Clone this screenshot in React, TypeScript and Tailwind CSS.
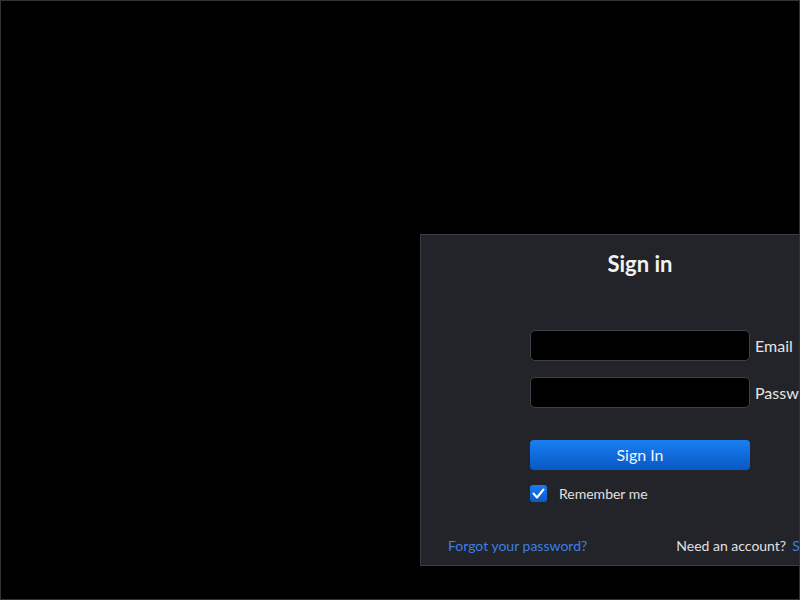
import React, { useState } from "react";

export default function App() {
  const [remember, setRemember] = useState(true);

  return (
    <div
      className="w-[800px] h-[600px] bg-black border border-[#2f3237] overflow-hidden relative"
      style={{ fontFamily: 'Lato, "Noto Sans", sans-serif' }}
    >
      {/* Sign in panel */}
      <div className="absolute left-[419px] top-[233px] w-[440px] h-[332px] bg-[#222429] border border-[#3b3d42] flex flex-col">
        <h2 className="text-[22px] font-bold text-[#f2f2f2] text-center mt-[14px] leading-[30px]">Sign in</h2>

        <div className="mt-[51px] pl-[109px] flex flex-col">
          <div className="flex items-center gap-[5px]">
            <input
              type="email"
              className="w-[220px] h-[31px] bg-black border border-[#3e4147] rounded-[5px] outline-none text-white px-2"
            />
            <label className="text-[16px] text-[#e6e6e6]">Email</label>
          </div>
          <div className="flex items-center gap-[5px] mt-[16px]">
            <input
              type="password"
              className="w-[220px] h-[31px] bg-black border border-[#3e4147] rounded-[5px] outline-none text-white px-2"
            />
            <label className="text-[16px] text-[#e6e6e6] whitespace-nowrap">Password</label>
          </div>

          <button className="mt-[32px] w-[220px] h-[30px] rounded-[4px] bg-gradient-to-b from-[#1b7ff2] to-[#0858c4] text-[16px] text-[#eef4ff]">
            Sign In
          </button>

          <label className="mt-[13px] flex items-center gap-[12px] cursor-pointer">
            <span
              onClick={() => setRemember(!remember)}
              className="w-[17px] h-[17px] rounded-[3px] bg-gradient-to-b from-[#1a7cf0] to-[#0a5ac6] flex items-center justify-center"
            >
              {remember && (
                <svg width="13" height="11" viewBox="0 0 13 11" fill="none">
                  <path d="M1.5 5.5 L5 9.5 L11.5 1.5" stroke="white" strokeWidth="2" strokeLinecap="round" strokeLinejoin="round" />
                </svg>
              )}
            </span>
            <span className="text-[14px] text-[#e0e0e0]">Remember me</span>
          </label>
        </div>

        <div className="mt-auto mb-[9px] flex items-center pl-[27px] text-[14px] whitespace-nowrap">
          <a href="#" className="text-[#3d7ee6]">Forgot your password?</a>
          <span className="ml-[89px] text-[#e0e0e0]">Need an account?</span>
          <a href="#" className="ml-[6px] text-[#3d7ee6]">Sign up</a>
        </div>
      </div>
    </div>
  );
}
